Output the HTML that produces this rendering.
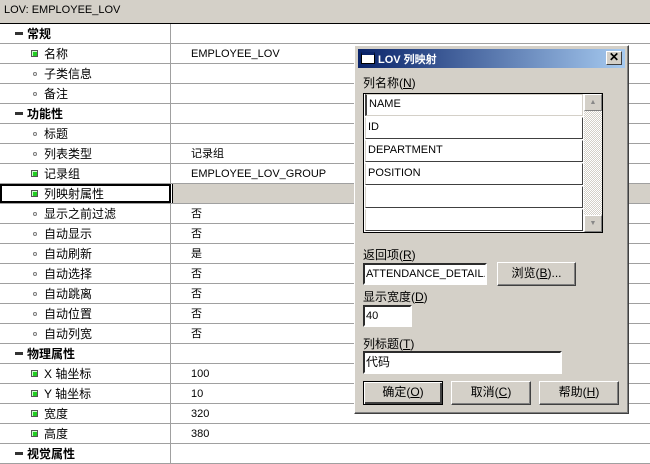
<!DOCTYPE html>
<html><head><meta charset="utf-8"><style>
*{margin:0;padding:0;box-sizing:border-box}
body{width:650px;height:461px;overflow:hidden;background:#fff;font-family:"Liberation Sans","Noto Sans CJK SC",sans-serif;font-size:12px;color:#000;position:relative}
.hdr{position:absolute;left:0;top:0;width:650px;height:24px;background:#d4d0c8;border-bottom:1px solid #000;padding:4px 0 0 4px;font-size:11px}
.row{position:absolute;left:0;width:650px;height:20px;border-bottom:1px solid #a0a0a0}
.row .l{position:absolute;left:0;top:0;width:171px;height:19px;border-right:1px solid #a0a0a0}
.row .t{position:absolute;top:2px;left:44px;line-height:16px;white-space:nowrap}
.row .v{position:absolute;left:191px;top:2px;line-height:16px;font-size:11px}
.cat .t{left:27px;font-weight:bold}
.cat .ic{position:absolute;left:15px;top:8px;width:8px;height:3px;background:#333}
.gr{position:absolute;left:31px;top:6px;width:7px;height:7px;background:#2c2;border:1px solid #555;box-shadow:inset 1px 1px 0 #cfc}
.dot{position:absolute;left:33px;top:8px;width:4px;height:4px;border:1px solid #777;border-radius:50%}
.sel .l{border:2px solid #000}
.sel .vv{position:absolute;left:172px;top:0;width:478px;height:19px;background:#d4d0c8;border-left:1px solid #000}
.dlg{position:absolute;left:354px;top:45px;width:275px;height:369px;background:#d4d0c8;border:1px solid;border-color:#fff #404040 #404040 #fff;box-shadow:inset -1px -1px 0 #808080}
.tb{position:absolute;left:3px;top:3px;width:267px;height:19px;background:linear-gradient(90deg,#0a246a,#a6caf0);color:#fff;font-weight:bold;padding:2px 0 0 20px;font-size:11px}
.tb .wi{position:absolute;left:3px;top:3px;width:14px;height:12px;background:#fff;border:1px solid #000;border-top:3px solid #0a246a}
.x{position:absolute;right:3px;top:2px;width:16px;height:14px;background:#d4d0c8;border:1px solid;border-color:#fff #404040 #404040 #fff;color:#000;font-size:12px;line-height:11px;text-align:center;padding:0}
.lab{position:absolute;font-size:12px;white-space:nowrap}
.inp{position:absolute;background:#fff;border:2px inset #808080;border-color:#808080 #fff #fff #808080;font-size:11px;padding:2px 1px;white-space:nowrap;overflow:hidden;line-height:15px}
.lb{position:absolute;left:8px;top:47px;width:240px;height:140px;border:1px solid #000;background:#fff}
.cell{position:absolute;left:1px;width:218px;height:22px;background:#fff;border:1px solid;border-color:#fff #404040 #404040 #d4d0c8;font-size:11px;padding:3px 2px}
.sb{position:absolute;right:0;top:0;width:18px;height:138px;background:repeating-conic-gradient(#d4d0c8 0 25%,#fff 0 50%) 0 0/2px 2px}
.sbb{position:absolute;left:0;width:18px;height:17px;background:#d4d0c8;border:1px solid;border-color:#fff #808080 #808080 #fff;font-size:7px;color:#888;text-align:center;line-height:15px}
.btn{position:absolute;height:24px;background:#d4d0c8;border:1px solid;border-color:#fff #404040 #404040 #fff;box-shadow:inset -1px -1px 0 #808080;text-align:center;line-height:21px;font-size:12px}
u{text-decoration:underline}
</style></head><body>
<div class="hdr">LOV: EMPLOYEE_LOV</div>

<div class="row cat" style="top:24px"><div class="l"></div><div class="ic"></div><div class="t">常规</div></div>
<div class="row" style="top:44px"><div class="l"></div><div class="gr"></div><div class="t">名称</div><div class="v">EMPLOYEE_LOV</div></div>
<div class="row" style="top:64px"><div class="l"></div><div class="dot"></div><div class="t">子类信息</div></div>
<div class="row" style="top:84px"><div class="l"></div><div class="dot"></div><div class="t">备注</div></div>
<div class="row cat" style="top:104px"><div class="l"></div><div class="ic"></div><div class="t">功能性</div></div>
<div class="row" style="top:124px"><div class="l"></div><div class="dot"></div><div class="t">标题</div></div>
<div class="row" style="top:144px"><div class="l"></div><div class="dot"></div><div class="t">列表类型</div><div class="v">记录组</div></div>
<div class="row" style="top:164px"><div class="l"></div><div class="gr"></div><div class="t">记录组</div><div class="v">EMPLOYEE_LOV_GROUP</div></div>
<div class="row sel" style="top:184px"><div class="l"></div><div class="vv"></div><div class="gr"></div><div class="t">列映射属性</div></div>
<div class="row" style="top:204px"><div class="l"></div><div class="dot"></div><div class="t">显示之前过滤</div><div class="v">否</div></div>
<div class="row" style="top:224px"><div class="l"></div><div class="dot"></div><div class="t">自动显示</div><div class="v">否</div></div>
<div class="row" style="top:244px"><div class="l"></div><div class="dot"></div><div class="t">自动刷新</div><div class="v">是</div></div>
<div class="row" style="top:264px"><div class="l"></div><div class="dot"></div><div class="t">自动选择</div><div class="v">否</div></div>
<div class="row" style="top:284px"><div class="l"></div><div class="dot"></div><div class="t">自动跳离</div><div class="v">否</div></div>
<div class="row" style="top:304px"><div class="l"></div><div class="dot"></div><div class="t">自动位置</div><div class="v">否</div></div>
<div class="row" style="top:324px"><div class="l"></div><div class="dot"></div><div class="t">自动列宽</div><div class="v">否</div></div>
<div class="row cat" style="top:344px"><div class="l"></div><div class="ic"></div><div class="t">物理属性</div></div>
<div class="row" style="top:364px"><div class="l"></div><div class="gr"></div><div class="t">X 轴坐标</div><div class="v">100</div></div>
<div class="row" style="top:384px"><div class="l"></div><div class="gr"></div><div class="t">Y 轴坐标</div><div class="v">10</div></div>
<div class="row" style="top:404px"><div class="l"></div><div class="gr"></div><div class="t">宽度</div><div class="v">320</div></div>
<div class="row" style="top:424px"><div class="l"></div><div class="gr"></div><div class="t">高度</div><div class="v">380</div></div>
<div class="row cat" style="top:444px"><div class="l"></div><div class="ic"></div><div class="t">视觉属性</div></div>

<div class="dlg">
 <div class="tb"><div class="wi"></div>LOV 列映射<div class="x">✕</div></div>
 <div class="lab" style="left:8px;top:28px">列名称(<u>N</u>)</div>
 <div class="lb">
  <div class="cell" style="top:0;border:1px solid #d4d0c8;border-left:2px solid #404040">NAME</div>
  <div class="cell" style="top:23px">ID</div>
  <div class="cell" style="top:46px">DEPARTMENT</div>
  <div class="cell" style="top:69px">POSITION</div>
  <div class="cell" style="top:92px"></div>
  <div class="cell" style="top:115px"></div>
  <div class="sb"><div class="sbb" style="top:0">▲</div><div class="sbb" style="top:121px">▼</div></div>
 </div>
 <div class="lab" style="left:8px;top:200px">返回项(<u>R</u>)</div>
 <div class="inp" style="left:8px;top:217px;width:124px;height:22px">ATTENDANCE_DETAIL.NA</div>
 <div class="btn" style="left:142px;top:216px;width:79px">浏览(<u>B</u>)...</div>
 <div class="lab" style="left:8px;top:242px">显示宽度(<u>D</u>)</div>
 <div class="inp" style="left:8px;top:259px;width:49px;height:22px">40</div>
 <div class="lab" style="left:8px;top:289px">列标题(<u>T</u>)</div>
 <div class="inp" style="left:8px;top:305px;width:199px;height:23px;font-size:12px">代码</div>
 <div class="btn" style="left:8px;top:335px;width:80px;border:1px solid #000;box-shadow:inset 1px 1px 0 #fff,inset -2px -2px 0 #404040">确定(<u>O</u>)</div>
 <div class="btn" style="left:96px;top:335px;width:80px">取消(<u>C</u>)</div>
 <div class="btn" style="left:184px;top:335px;width:80px">帮助(<u>H</u>)</div>
</div>
</body></html>
